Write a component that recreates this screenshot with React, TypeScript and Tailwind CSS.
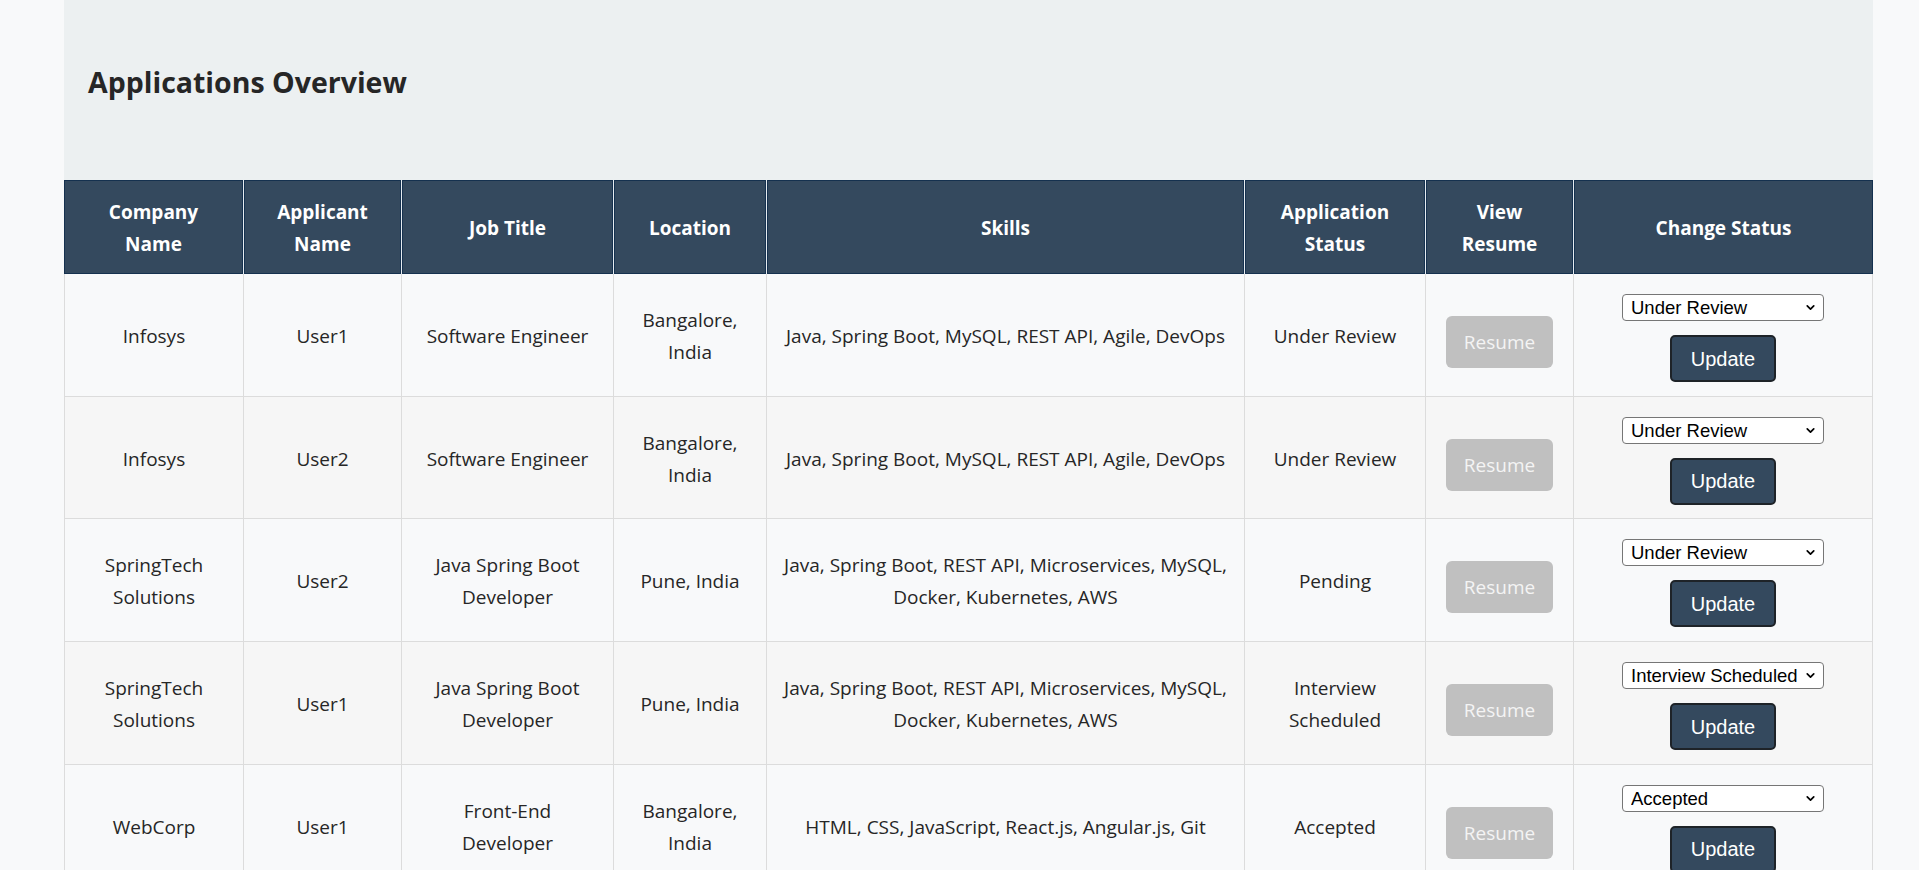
import { useState } from 'react';
import { ChevronDown } from 'lucide-react';

type Application = {
  id: number;
  company: string;
  applicant: string;
  jobTitle: string;
  location: string;
  skills: string;
  status: string;
  selected: string;
};

const applications: Application[] = [
  {
    id: 1,
    company: 'Infosys',
    applicant: 'User1',
    jobTitle: 'Software Engineer',
    location: 'Bangalore, India',
    skills: 'Java, Spring Boot, MySQL, REST API, Agile, DevOps',
    status: 'Under Review',
    selected: 'Under Review',
  },
  {
    id: 2,
    company: 'Infosys',
    applicant: 'User2',
    jobTitle: 'Software Engineer',
    location: 'Bangalore, India',
    skills: 'Java, Spring Boot, MySQL, REST API, Agile, DevOps',
    status: 'Under Review',
    selected: 'Under Review',
  },
  {
    id: 3,
    company: 'SpringTech Solutions',
    applicant: 'User2',
    jobTitle: 'Java Spring Boot Developer',
    location: 'Pune, India',
    skills: 'Java, Spring Boot, REST API, Microservices, MySQL, Docker, Kubernetes, AWS',
    status: 'Pending',
    selected: 'Under Review',
  },
  {
    id: 4,
    company: 'SpringTech Solutions',
    applicant: 'User1',
    jobTitle: 'Java Spring Boot Developer',
    location: 'Pune, India',
    skills: 'Java, Spring Boot, REST API, Microservices, MySQL, Docker, Kubernetes, AWS',
    status: 'Interview Scheduled',
    selected: 'Interview Scheduled',
  },
  {
    id: 5,
    company: 'WebCorp',
    applicant: 'User1',
    jobTitle: 'Front-End Developer',
    location: 'Bangalore, India',
    skills: 'HTML, CSS, JavaScript, React.js, Angular.js, Git',
    status: 'Accepted',
    selected: 'Accepted',
  },
];

const statusOptions = ['Pending', 'Under Review', 'Interview Scheduled', 'Accepted', 'Rejected'];

const headers = [
  'Company Name',
  'Applicant Name',
  'Job Title',
  'Location',
  'Skills',
  'Application Status',
  'View Resume',
  'Change Status',
];

const colWidths = ['w-[179px]', 'w-[158px]', 'w-[212px]', 'w-[153px]', 'w-[478px]', 'w-[181px]', 'w-[148px]', 'w-[300px]'];

const cell = 'border-b border-l border-[#dcdcdc] px-[16px] pt-[2px] text-center align-middle';

function StatusCell({ initial }: { initial: string }) {
  const [value, setValue] = useState(initial);
  return (
    <div className="flex flex-col items-center gap-[14px]">
      <div className="relative">
        <select
          value={value}
          onChange={(e) => setValue(e.target.value)}
          className="block h-[27px] w-[202px] appearance-none rounded-[4px] border border-[#767676] bg-white pl-[8px] pr-[24px] text-left text-[18.5px] leading-[25px] text-black [font-family:'Liberation_Sans',Arial,sans-serif]"
        >
          {statusOptions.map((opt) => (
            <option key={opt} value={opt}>
              {opt}
            </option>
          ))}
        </select>
        <ChevronDown
          size={13}
          strokeWidth={3.2}
          className="pointer-events-none absolute right-[7px] top-[7px] text-black"
        />
      </div>
      <button className="h-[47px] w-[106px] rounded-[5px] border-2 border-[#1e2328] bg-[#34495e] text-[20px] text-white [font-family:'Liberation_Sans',Arial,sans-serif]">
        Update
      </button>
    </div>
  );
}

export default function App() {
  return (
    <div className="min-h-screen bg-[#f8f9fa] text-[#262626] [font-family:'Open_Sans','Noto_Sans',sans-serif]">
      <div className="ml-16 w-[1809px] bg-[#ecf0f1]">
        {/* Title */}
        <div className="pl-[24px] pt-[64px] pb-[80px]">
          <h2 className="text-[28.5px] leading-[36px] font-bold text-[#262626]">Applications Overview</h2>
        </div>

        {/* Table */}
        <table className="w-full table-fixed border-separate border-spacing-0 text-[19px] leading-[32px]">
          <colgroup>
            {colWidths.map((w, i) => (
              <col key={i} className={w} />
            ))}
          </colgroup>
          <thead>
            <tr className="h-[94px]">
              {headers.map((h, i) => (
                <th
                  key={h}
                  className={`bg-[#34495e] px-[15px] pt-[2px] text-center align-middle font-bold text-white shadow-[inset_0_0_0_1px_#15314f] ${
                    i > 0 ? 'border-l border-l-[#e6ebf0]' : ''
                  }`}
                >
                  {h}
                </th>
              ))}
            </tr>
          </thead>
          <tbody>
            {applications.map((app, idx) => (
              <tr key={app.id} className={idx % 2 === 0 ? 'bg-[#f8f9fa]' : 'bg-[#f6f6f6]'}>
                <td className={cell}>{app.company}</td>
                <td className={cell}>{app.applicant}</td>
                <td className={cell}>{app.jobTitle}</td>
                <td className={cell}>{app.location}</td>
                <td className={cell}>{app.skills}</td>
                <td className={cell}>{app.status}</td>
                <td className={cell}>
                  <div className="flex justify-center">
                    <a className="mt-3 flex h-[52px] w-[107px] cursor-not-allowed items-center justify-center rounded-[6px] bg-[#c0c0c0] text-[19px] text-[#f4f4f4]">
                      Resume
                    </a>
                  </div>
                </td>
                <td className="border-b border-l border-r border-[#dcdcdc] px-[15px] pt-[20px] pb-[13.7px] text-center align-middle">
                  <StatusCell initial={app.selected} />
                </td>
              </tr>
            ))}
          </tbody>
        </table>
      </div>
    </div>
  );
}
